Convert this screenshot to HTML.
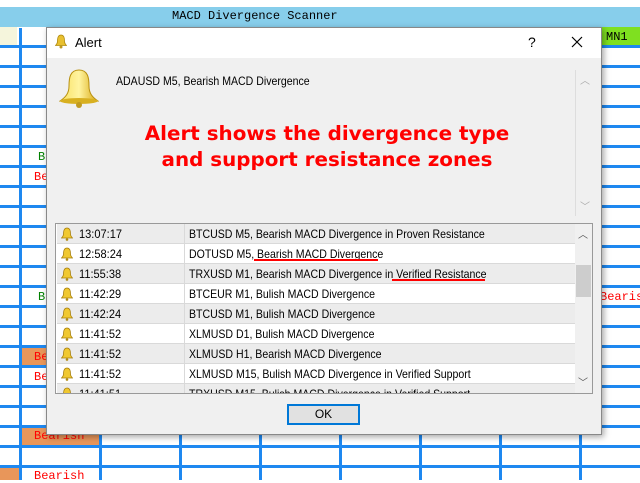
<!DOCTYPE html>
<html><head><style>
*{margin:0;padding:0;box-sizing:border-box}
body{width:640px;height:480px;overflow:hidden;position:relative;background:#fff;font-family:"Liberation Sans",sans-serif}
.a{position:absolute}
.grid{left:0;top:28px;width:640px;height:452px;
background-image:repeating-linear-gradient(to bottom,transparent 0 17px,#1e88f0 17px 20px),repeating-linear-gradient(to right,transparent 0 19px,#1e88f0 19px 22px,transparent 22px 80px);}
.mono{font-family:"Liberation Mono",monospace;font-size:12px}
.row{position:absolute;left:1px;width:518px;height:20px;border-bottom:1px solid #d9d9d9;font-size:12px;color:#000}
.row .t{position:absolute;left:22px;top:3px;transform:scaleX(.92);transform-origin:left}
.row .m{position:absolute;left:132px;top:3px;transform:scaleX(.88);transform-origin:left;white-space:nowrap}
.row .d{position:absolute;left:127px;top:0;width:1px;height:20px;background:#d9d9d9}
.row svg{position:absolute;left:4px;top:3px}
</style></head><body>
<div class="a grid"></div>
<div class="a" style="left:0;top:7px;width:640px;height:20px;background:#87ceeb"></div>
<div class="a mono" style="left:172px;top:9px">MACD Divergence Scanner</div>
<div class="a" style="left:0;top:27px;width:17px;height:18px;background:#f5f5dc"></div>
<div class="a" style="left:601px;top:27px;width:39px;height:18px;background:#7fe020"></div>
<div class="a mono" style="left:606px;top:30px">MN1</div>
<div class="a mono" style="left:38px;top:150px;color:#008000">B</div>
<div class="a mono" style="left:34px;top:170px;color:#f00">Bea</div>
<div class="a mono" style="left:38px;top:290px;color:#008000">B</div>
<div class="a" style="left:22px;top:348px;width:30px;height:17px;background:#e8965a"></div>
<div class="a mono" style="left:34px;top:350px;color:#f00">Be</div>
<div class="a mono" style="left:34px;top:370px;color:#f00">Be</div>
<div class="a" style="left:22px;top:428px;width:77px;height:17px;background:#e8965a"></div>
<div class="a mono" style="left:34px;top:429px;color:#f00">Bearish</div>
<div class="a" style="left:0;top:468px;width:19px;height:12px;background:#e8965a"></div>
<div class="a mono" style="left:34px;top:469px;color:#f00">Bearish</div>
<div class="a mono" style="left:600px;top:290px;color:#f00">Bearish</div>

<div class="a" style="left:46px;top:27px;width:556px;height:408px;background:#f0f0f0;border:1px solid #888;box-shadow:2px 2px 6px rgba(0,0,0,.35)">
 <div class="a" style="left:0;top:0;width:554px;height:30px;background:#fff"></div>
 <svg class="a" style="left:8px;top:6px" width="12" height="15" viewBox="0 0 12 15"><path d="M6 1C3 1 2.5 4 2.5 7C2.5 9 1.5 10.5 0.5 11.5L11.5 11.5C10.5 10.5 9.5 9 9.5 7C9.5 4 9 1 6 1Z" fill="#e8c030" stroke="#b08a10" stroke-width=".8"/><circle cx="6" cy="13" r="1.5" fill="#c09a20"/></svg>
 <div class="a" style="left:28px;top:7px;font-size:13px">Alert</div>
 <div class="a" style="left:481px;top:6px;font-size:14px">?</div>
 <svg class="a" style="left:524px;top:8px" width="12" height="12" viewBox="0 0 12 12"><path d="M1 1L11 11M11 1L1 11" stroke="#000" stroke-width="1.2"/></svg>
 <svg class="a" style="left:12px;top:40px" width="40" height="42" viewBox="0 0 40 42"><defs><linearGradient id="g" x1="0" x2="1"><stop offset="0" stop-color="#f8e060"/><stop offset=".5" stop-color="#fff4a0"/><stop offset="1" stop-color="#d8a810"/></linearGradient></defs><path d="M20 2C11 2 10 10 10 18C10 25 7 29 1 33L39 33C33 29 30 25 30 18C30 10 29 2 20 2Z" fill="url(#g)" stroke="#b89010"/><ellipse cx="20" cy="33" rx="19" ry="3" fill="#d8b020"/><circle cx="20" cy="37" r="3" fill="#c09a20"/></svg>
 <div class="a" style="left:69px;top:46px;font-size:12px;transform:scaleX(.88);transform-origin:left;white-space:nowrap">ADAUSD M5, Bearish MACD Divergence</div>
 <div class="a" style="left:528px;top:42px;width:1px;height:146px;background:#ddd"></div>
 <div class="a" style="left:533px;top:44px;font-size:10px;color:#aaa">︿</div>
 <div class="a" style="left:533px;top:170px;font-size:10px;color:#aaa">﹀</div>
 <div class="a" style="left:80px;top:93px;width:400px;text-align:center;color:#f00;font-weight:bold;font-size:19.5px;line-height:26px;font-family:'Comic Sans MS','DejaVu Sans',sans-serif;transform:scaleX(1.02)">Alert shows the divergence type<br>and support resistance zones</div>
 <div class="a" style="left:8px;top:195px;width:538px;height:171px;background:#fff;border:1px solid #999;overflow:hidden">
  <div class="row" style="top:0;background:#ececec"><svg width="12" height="14" viewBox="0 0 12 14"><path d="M6 1C3 1 2.5 4 2.5 7C2.5 9 1.5 10 .5 11L11.5 11C10.5 10 9.5 9 9.5 7C9.5 4 9 1 6 1Z" fill="#f0c830" stroke="#a88010" stroke-width=".8"/><circle cx="6" cy="12.5" r="1.3" fill="#b08a10"/></svg><span class="t">13:07:17</span><div class="d"></div><span class="m">BTCUSD M5, Bearish MACD Divergence in Proven Resistance</span></div>
  <div class="row" style="top:20px"><svg width="12" height="14" viewBox="0 0 12 14"><path d="M6 1C3 1 2.5 4 2.5 7C2.5 9 1.5 10 .5 11L11.5 11C10.5 10 9.5 9 9.5 7C9.5 4 9 1 6 1Z" fill="#f0c830" stroke="#a88010" stroke-width=".8"/><circle cx="6" cy="12.5" r="1.3" fill="#b08a10"/></svg><span class="t">12:58:24</span><div class="d"></div><span class="m">DOTUSD M5, Bearish MACD Divergence</span></div>
  <div class="row" style="top:40px;background:#ececec"><svg width="12" height="14" viewBox="0 0 12 14"><path d="M6 1C3 1 2.5 4 2.5 7C2.5 9 1.5 10 .5 11L11.5 11C10.5 10 9.5 9 9.5 7C9.5 4 9 1 6 1Z" fill="#f0c830" stroke="#a88010" stroke-width=".8"/><circle cx="6" cy="12.5" r="1.3" fill="#b08a10"/></svg><span class="t">11:55:38</span><div class="d"></div><span class="m">TRXUSD M1, Bearish MACD Divergence in Verified Resistance</span></div>
  <div class="row" style="top:60px"><svg width="12" height="14" viewBox="0 0 12 14"><path d="M6 1C3 1 2.5 4 2.5 7C2.5 9 1.5 10 .5 11L11.5 11C10.5 10 9.5 9 9.5 7C9.5 4 9 1 6 1Z" fill="#f0c830" stroke="#a88010" stroke-width=".8"/><circle cx="6" cy="12.5" r="1.3" fill="#b08a10"/></svg><span class="t">11:42:29</span><div class="d"></div><span class="m">BTCEUR M1, Bulish MACD Divergence</span></div>
  <div class="row" style="top:80px;background:#ececec"><svg width="12" height="14" viewBox="0 0 12 14"><path d="M6 1C3 1 2.5 4 2.5 7C2.5 9 1.5 10 .5 11L11.5 11C10.5 10 9.5 9 9.5 7C9.5 4 9 1 6 1Z" fill="#f0c830" stroke="#a88010" stroke-width=".8"/><circle cx="6" cy="12.5" r="1.3" fill="#b08a10"/></svg><span class="t">11:42:24</span><div class="d"></div><span class="m">BTCUSD M1, Bulish MACD Divergence</span></div>
  <div class="row" style="top:100px"><svg width="12" height="14" viewBox="0 0 12 14"><path d="M6 1C3 1 2.5 4 2.5 7C2.5 9 1.5 10 .5 11L11.5 11C10.5 10 9.5 9 9.5 7C9.5 4 9 1 6 1Z" fill="#f0c830" stroke="#a88010" stroke-width=".8"/><circle cx="6" cy="12.5" r="1.3" fill="#b08a10"/></svg><span class="t">11:41:52</span><div class="d"></div><span class="m">XLMUSD D1, Bulish MACD Divergence</span></div>
  <div class="row" style="top:120px;background:#ececec"><svg width="12" height="14" viewBox="0 0 12 14"><path d="M6 1C3 1 2.5 4 2.5 7C2.5 9 1.5 10 .5 11L11.5 11C10.5 10 9.5 9 9.5 7C9.5 4 9 1 6 1Z" fill="#f0c830" stroke="#a88010" stroke-width=".8"/><circle cx="6" cy="12.5" r="1.3" fill="#b08a10"/></svg><span class="t">11:41:52</span><div class="d"></div><span class="m">XLMUSD H1, Bearish MACD Divergence</span></div>
  <div class="row" style="top:140px"><svg width="12" height="14" viewBox="0 0 12 14"><path d="M6 1C3 1 2.5 4 2.5 7C2.5 9 1.5 10 .5 11L11.5 11C10.5 10 9.5 9 9.5 7C9.5 4 9 1 6 1Z" fill="#f0c830" stroke="#a88010" stroke-width=".8"/><circle cx="6" cy="12.5" r="1.3" fill="#b08a10"/></svg><span class="t">11:41:52</span><div class="d"></div><span class="m">XLMUSD M15, Bulish MACD Divergence in Verified Support</span></div>
  <div class="row" style="top:160px;background:#ececec"><svg width="12" height="14" viewBox="0 0 12 14"><path d="M6 1C3 1 2.5 4 2.5 7C2.5 9 1.5 10 .5 11L11.5 11C10.5 10 9.5 9 9.5 7C9.5 4 9 1 6 1Z" fill="#f0c830" stroke="#a88010" stroke-width=".8"/></svg><span class="t">11:41:51</span><div class="d"></div><span class="m">TRXUSD M15, Bulish MACD Divergence in Verified Support</span></div>
  <div class="a" style="left:519px;top:0;width:17px;height:169px;background:#f0f0f0"></div>
  <div class="a" style="left:520px;top:41px;width:15px;height:32px;background:#cdcdcd"></div>
  <div class="a" style="left:522px;top:2px;font-size:10px;color:#555">︿</div>
  <div class="a" style="left:522px;top:150px;font-size:10px;color:#555">﹀</div>
  <div class="a" style="left:198px;top:35px;width:124px;height:2px;background:#f00"></div>
  <div class="a" style="left:336px;top:55px;width:93px;height:2px;background:#f00"></div>
 </div>
 <div class="a" style="left:240px;top:376px;width:73px;height:21px;background:#e1e1e1;border:2px solid #0078d7;font-size:12px;text-align:center;line-height:17px">OK</div>
</div>
</body></html>
